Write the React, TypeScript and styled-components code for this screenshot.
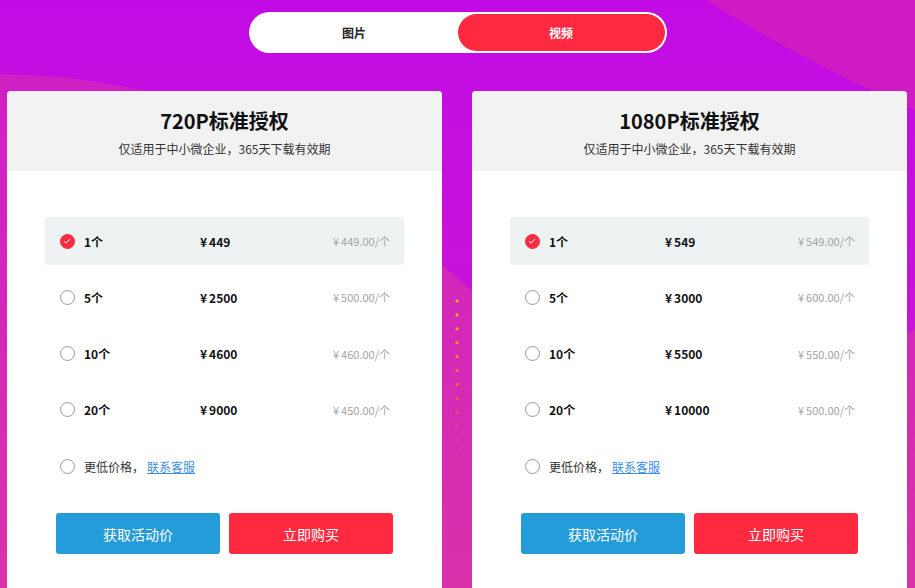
import React, { useState } from "react";
import styled, { createGlobalStyle } from "styled-components";

const GlobalStyle = createGlobalStyle`
  html, body {
    margin: 0;
    padding: 0;
  }
  body {
    font-family: "Noto Sans CJK SC", "Noto Sans", sans-serif;
    overflow: hidden;
  }
`;

type Option = {
  count: string;
  total: string;
  unit: string;
};

type Plan = {
  title: string;
  options: Option[];
};

const plans: Plan[] = [
  {
    title: "720P标准授权",
    options: [
      { count: "1个", total: "449", unit: "449.00/个" },
      { count: "5个", total: "2500", unit: "500.00/个" },
      { count: "10个", total: "4600", unit: "460.00/个" },
      { count: "20个", total: "9000", unit: "450.00/个" },
    ],
  },
  {
    title: "1080P标准授权",
    options: [
      { count: "1个", total: "549", unit: "549.00/个" },
      { count: "5个", total: "3000", unit: "600.00/个" },
      { count: "10个", total: "5500", unit: "550.00/个" },
      { count: "20个", total: "10000", unit: "500.00/个" },
    ],
  },
];

const Page = styled.div`
  position: relative;
  width: 915px;
  height: 588px;
  overflow: hidden;
  background: #c40ee0;
`;

const Backdrop = styled.svg`
  position: absolute;
  inset: 0;
  width: 100%;
  height: 100%;
  z-index: 0;
`;

const Content = styled.div`
  position: relative;
  z-index: 1;
  display: flex;
  flex-direction: column;
  align-items: center;
  padding-top: 12px;
`;

const Toggle = styled.div`
  display: flex;
  width: 418px;
  height: 41px;
  box-sizing: border-box;
  padding: 2px;
  background: #fff;
  border-radius: 21px;
`;

const Tab = styled.button<{ $active: boolean }>`
  flex: 1;
  border: none;
  border-radius: 19px;
  font-family: inherit;
  font-size: 12px;
  font-weight: 700;
  cursor: pointer;
  color: ${(p) => (p.$active ? "#fff" : "#222")};
  background: ${(p) => (p.$active ? "#ff2940" : "transparent")};
  box-shadow: ${(p) => (p.$active ? "0 0 0 1px rgba(255,255,255,0.7)" : "none")};
`;

const Cards = styled.div`
  display: flex;
  gap: 30px;
  margin-top: 38px;
  padding: 0 8px 0 7px;
`;

const Card = styled.section`
  width: 435px;
  height: 520px;
  background: #fff;
  border-radius: 4px 4px 0 0;
  overflow: hidden;
`;

const CardHead = styled.header`
  height: 80px;
  box-sizing: border-box;
  padding-top: 18px;
  background: #f2f2f2;
  text-align: center;
`;

const Title = styled.h2`
  margin: 0;
  font-size: 20px;
  line-height: 24px;
  font-weight: 700;
  color: #111;
`;

const Subtitle = styled.p`
  margin: 8px 0 0;
  font-size: 12px;
  line-height: 16px;
  color: #333;
`;

const List = styled.ul`
  list-style: none;
  margin: 0;
  padding: 46px 38px 0;
  display: flex;
  flex-direction: column;
  gap: 8.3px;
`;

const Row = styled.li<{ $selected: boolean }>`
  display: flex;
  align-items: center;
  height: 48px;
  padding: 0 14px 0 14.5px;
  border-radius: 3px;
  cursor: pointer;
  background: ${(p) => (p.$selected ? "#eff2f3" : "transparent")};
`;

const Radio = styled.span<{ $checked: boolean }>`
  display: flex;
  align-items: center;
  justify-content: center;
  width: 15px;
  height: 15px;
  flex-shrink: 0;
  box-sizing: border-box;
  border-radius: 50%;
  border: 1px solid ${(p) => (p.$checked ? "#ff2940" : "#9a9a9a")};
  background: ${(p) => (p.$checked ? "#ff2940" : "#fff")};
`;

const Count = styled.span`
  width: 116px;
  margin-left: 9.5px;
  font-size: 12px;
  font-weight: 700;
  color: #111;
`;

const Total = styled.span`
  flex: 1;
  font-size: 12px;
  font-weight: 700;
  color: #111;
`;

const Yen = styled.span`
  margin-right: 2px;
`;

const Unit = styled.span`
  font-size: 11px;
  color: #a3a3a3;
`;

const Note = styled.span`
  margin-left: 9.5px;
  font-size: 12px;
  color: #333;
`;

const Link = styled.a`
  margin-left: 3px;
  font-size: 12px;
  color: #3a8ee6;
  text-decoration: underline;
`;

const Actions = styled.div`
  display: flex;
  gap: 9px;
  padding: 23px 49px 0;
`;

const ActionButton = styled.button<{ $tone: "blue" | "red" }>`
  flex: 1;
  height: 41px;
  border: none;
  border-radius: 3px;
  font-family: inherit;
  font-size: 14px;
  color: #fff;
  cursor: pointer;
  background: ${(p) => (p.$tone === "blue" ? "#249cd9" : "#ff2940")};
`;

const Check = () => (
  <svg width="8" height="8" viewBox="0 0 8 8">
    <path d="M1 4.2 L3.1 6.2 L7 1.8" fill="none" stroke="#fff" strokeWidth="1" />
  </svg>
);

const dotColors = [
  "#ffba00",
  "#ffb300",
  "#fca50a",
  "#f99818",
  "#f58a28",
  "#f07c3a",
  "#ea6e4c",
  "#e4605e",
  "#de5470",
  "#da4a80",
  "#d8408e",
  "#d73a9a",
];

const PricingCard = ({ plan }: { plan: Plan }) => {
  const [selected, setSelected] = useState(0);
  return (
    <Card>
      <CardHead>
        <Title>{plan.title}</Title>
        <Subtitle>仅适用于中小微企业，365天下载有效期</Subtitle>
      </CardHead>
      <List>
        {plan.options.map((o, i) => (
          <Row key={o.count} $selected={selected === i} onClick={() => setSelected(i)}>
            <Radio $checked={selected === i}>{selected === i && <Check />}</Radio>
            <Count>{o.count}</Count>
            <Total>
              <Yen>¥</Yen>
              {o.total}
            </Total>
            <Unit>
              <Yen>¥</Yen>
              {o.unit}
            </Unit>
          </Row>
        ))}
        <Row $selected={selected === 4} onClick={() => setSelected(4)}>
          <Radio $checked={selected === 4}>{selected === 4 && <Check />}</Radio>
          <Note>更低价格，</Note>
          <Link href="#">联系客服</Link>
        </Row>
      </List>
      <Actions>
        <ActionButton $tone="blue">获取活动价</ActionButton>
        <ActionButton $tone="red">立即购买</ActionButton>
      </Actions>
    </Card>
  );
};

const App = () => {
  const [tab, setTab] = useState(1);
  return (
    <>
      <GlobalStyle />
      <Page>
        <Backdrop viewBox="0 0 915 588" preserveAspectRatio="none">
          <defs>
            <linearGradient id="base" x1="0" y1="0" x2="0" y2="1">
              <stop offset="0" stopColor="#c20be4" />
              <stop offset="1" stopColor="#cc1ccc" />
            </linearGradient>
            <linearGradient id="wave" x1="0" y1="0" x2="0" y2="1">
              <stop offset="0" stopColor="#cf1fc6" />
              <stop offset="1" stopColor="#d932aa" />
            </linearGradient>
          </defs>
          <rect width="915" height="588" fill="url(#base)" />
          <path
            d="M0 74 C 150 76 300 120 440 262 C 560 380 720 420 915 330 L915 588 L0 588 Z"
            fill="url(#wave)"
          />
          <path d="M706 0 Q 800 60 915 110 L915 0 Z" fill="#d01cc4" />
          {dotColors.map((c, i) => (
            <circle key={c} cx="457" cy={301 + i * 13.9} r="1.6" fill={c} />
          ))}
        </Backdrop>
        <Content>
          <Toggle>
            <Tab $active={tab === 0} onClick={() => setTab(0)}>
              图片
            </Tab>
            <Tab $active={tab === 1} onClick={() => setTab(1)}>
              视频
            </Tab>
          </Toggle>
          <Cards>
            {plans.map((p) => (
              <PricingCard key={p.title} plan={p} />
            ))}
          </Cards>
        </Content>
      </Page>
    </>
  );
};

export default App;
